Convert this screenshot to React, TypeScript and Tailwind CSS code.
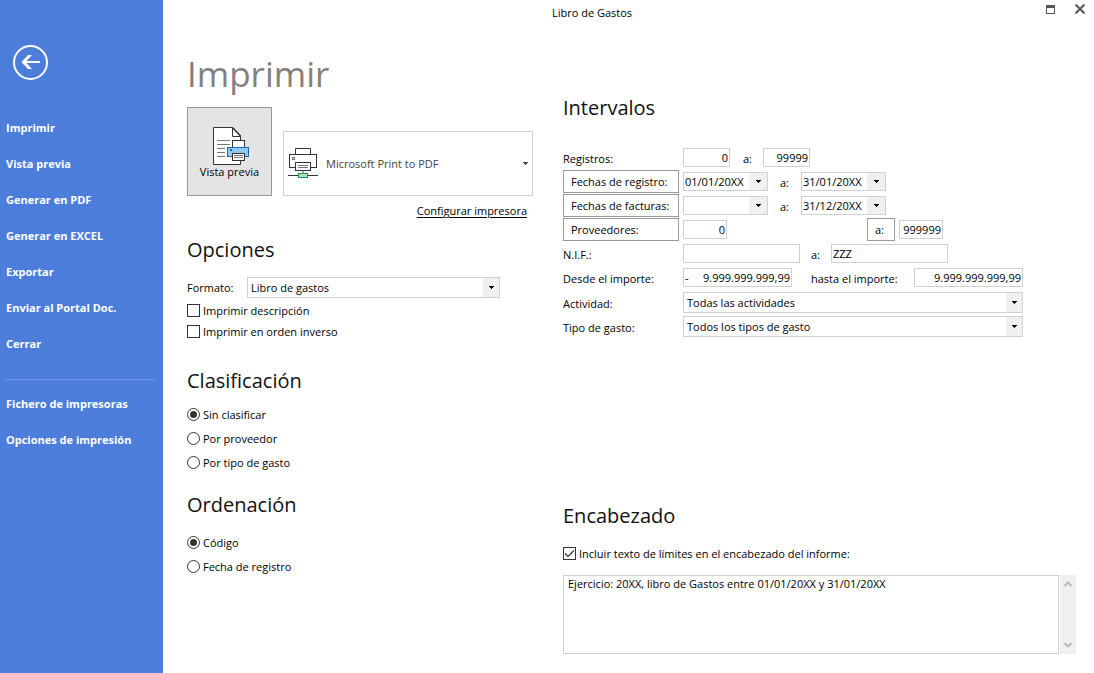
import React, { useState } from "react";

const MAIN_LINKS = [
  "Imprimir",
  "Vista previa",
  "Generar en PDF",
  "Generar en EXCEL",
  "Exportar",
  "Enviar al Portal Doc.",
  "Cerrar",
];
const EXTRA_LINKS = ["Fichero de impresoras", "Opciones de impresión"];

function Caret() {
  return (
    <svg width="5" height="3" viewBox="0 0 5 3" fill="currentColor" shapeRendering="crispEdges" aria-hidden="true">
      <path d="M0 0h5v1H4v1H3v1H2V2H1V1H0z" />
    </svg>
  );
}

function PreviewIcon() {
  return (
    <svg width="37" height="39" viewBox="0 0 37 39" fill="none" aria-hidden="true">
      <path d="M.5.5H19.5L27.5 9V37.5H.5z" fill="#fff" stroke="#333" />
      <path d="M19.5.5V9.5H27.5" stroke="#333" />
      <path d="M20 1l7.500 8" stroke="#333" strokeWidth="1.500" />
      <path d="M4 13.500h13M4 17.500h13M4 21.500h8M4 25.500h8M4 29.500h8" stroke="#777" />
      <rect x="19.500" y="13.500" width="12" height="8" fill="#fff" stroke="#333" />
      <rect x="14.500" y="20.500" width="21" height="9" fill="#90c8f2" stroke="#1a68b0" />
      <rect x="17" y="22" width="2" height="2" fill="#1a68b0" />
      <rect x="19.500" y="26.500" width="12" height="7" fill="#fff" stroke="#333" />
      <path d="M21 28.500h9M21 30.500h9" stroke="#777" />
    </svg>
  );
}

function PrinterIcon() {
  return (
    <svg width="30" height="31" viewBox="0 0 30 31" fill="none" aria-hidden="true">
      <path d="M7.500 6.500V.5H22.500V6.500" stroke="#333" />
      <rect x="1.500" y="6.500" width="27" height="13" fill="#fff" stroke="#333" />
      <rect x="4.500" y="9.500" width="2" height="2" stroke="#777" />
      <rect x="7.500" y="14.500" width="15" height="8" fill="#fff" stroke="#333" />
      <path d="M10 17.500h10M10 19.500h10" stroke="#777" />
      <path d="M15 23v2" stroke="#aaa" strokeWidth="2" />
      <path d="M0 27.500h30" stroke="#333" />
      <rect x="10.500" y="25.500" width="9" height="4" fill="#b5dfc0" stroke="#109a48" />
    </svg>
  );
}

function Heading({ children, className = "" }: { children: React.ReactNode; className?: string }) {
  return <h2 className={`text-[20px] leading-7 font-normal text-[#111] ${className}`}>{children}</h2>;
}

function CheckBox({ label, checked = false }: { label: string; checked?: boolean }) {
  const [on, setOn] = useState(checked);
  return (
    <label className="flex h-[21px] items-center gap-[3px]">
      <span className="relative size-[13px]">
        <input
          type="checkbox"
          checked={on}
          onChange={(e) => setOn(e.target.checked)}
          className="block size-[13px] appearance-none border border-[#333] bg-white"
        />
        {on && (
          <svg className="pointer-events-none absolute inset-0" width="13" height="13" viewBox="0 0 13 13" fill="none" aria-hidden="true">
            <path d="M2 6.500l3 3 6-6" stroke="#333" strokeWidth="1.200" />
          </svg>
        )}
      </span>
      {label}
    </label>
  );
}

function RadioList({ name, options, className = "" }: { name: string; options: string[]; className?: string }) {
  return (
    <div role="radiogroup" aria-label={name} className={className}>
      {options.map((option, i) => (
        <label key={option} className="flex h-6 items-center gap-[3px]">
          <input
            type="radio"
            name={name}
            defaultChecked={i === 0}
            className="grid size-[13px] appearance-none place-content-center rounded-full border border-[#333] bg-white before:size-[7px] before:rounded-full checked:before:bg-[#333]"
          />
          <span className="pt-0.5">{option}</span>
        </label>
      ))}
    </div>
  );
}

function DropDown({ id, value, className = "" }: { id: string; value: string; className?: string }) {
  return (
    <span className={`relative block ${className}`}>
      <select id={id} className="block h-[21px] w-full appearance-none border border-[#d0d0d0] bg-white pr-5 pl-[3px]">
        <option>{value}</option>
      </select>
      <span className="pointer-events-none absolute inset-y-px right-px flex w-4 items-center justify-center bg-[#f0f0f0]">
        <Caret />
      </span>
    </span>
  );
}

function Field({ label, value = "", className = "" }: { label: string; value?: string; className?: string }) {
  return (
    <input
      type="text"
      aria-label={label}
      defaultValue={value}
      className={`h-[19px] border border-[#d0d0d0] bg-white px-px ${className}`}
    />
  );
}

function DateField({ label, value = "" }: { label: string; value?: string }) {
  return (
    <span className="flex h-[19px] w-[85px] border border-[#d0d0d0] bg-white">
      <input type="text" aria-label={label} defaultValue={value} className="w-0 grow bg-transparent pl-px" />
      <button type="button" aria-label={`Elegir ${label}`} className="flex w-[18px] items-center justify-center bg-[#f0f0f0]">
        <Caret />
      </button>
    </span>
  );
}

function Row({ head, children }: { head: React.ReactNode; children: React.ReactNode }) {
  return (
    <div className="grid h-6 grid-cols-[116px_1fr] gap-x-1">
      <div className="flex h-[23px] items-center">{head}</div>
      <div className="flex h-[23px] items-center">{children}</div>
    </div>
  );
}

function RowText({ children, htmlFor }: { children: React.ReactNode; htmlFor?: string }) {
  return (
    <label htmlFor={htmlFor} className="pt-[3px]">
      {children}
    </label>
  );
}

function BoxButton({ children, className = "" }: { children: React.ReactNode; className?: string }) {
  return (
    <button type="button" className={`h-[23px] border border-[#999] bg-white text-left ${className}`}>
      {children}
    </button>
  );
}

function SideLink({ label }: { label: string }) {
  return (
    <li>
      <a href="#" className="flex h-9 items-center pl-1.5">
        {label}
      </a>
    </li>
  );
}

export default function App() {
  return (
    <div className="flex min-h-screen bg-white font-['Open_Sans','Noto_Sans',sans-serif] text-[11px] leading-4 text-black">
      <aside className="w-[163px] shrink-0 bg-[#4d7ddb] pt-[45px] font-bold text-white">
        <button type="button" aria-label="Volver" className="ml-[13px] block">
          <svg width="35" height="35" viewBox="0 0 35 35" fill="none" stroke="#fff" aria-hidden="true">
            <circle cx="17.500" cy="17.500" r="16.500" strokeWidth="2" />
            <path d="M10 17h17" strokeWidth="2" />
            <path d="M19 10h-4l-6.500 7 6.500 7h4l-6.500-7z" fill="#fff" stroke="none" />
          </svg>
        </button>
        <nav className="mt-[30px]">
          <ul>
            {MAIN_LINKS.map((label) => (
              <SideLink key={label} label={label} />
            ))}
          </ul>
          <hr className="mt-[17px] mr-2 mb-1.5 ml-[5px] border-[#7199e6]" />
          <ul>
            {EXTRA_LINKS.map((label) => (
              <SideLink key={label} label={label} />
            ))}
          </ul>
        </nav>
      </aside>

      <div className="flex min-w-0 grow flex-col">
        <header className="flex h-[26px]">
          <p className="grow pt-[5px] text-center">Libro de Gastos</p>
          <div className="flex gap-5 pt-1 pr-[9px] pl-6 text-[#555]">
            <button type="button" aria-label="Maximizar" className="size-[10px]">
              <svg width="10" height="10" viewBox="0 0 10 10" fill="currentColor" shapeRendering="crispEdges" aria-hidden="true">
                <path fillRule="evenodd" d="M1 1h9v9H1zM2 4v5h7V4z" />
              </svg>
            </button>
            <button type="button" aria-label="Cerrar ventana" className="size-[10px]">
              <svg width="10" height="10" viewBox="0 0 10 10" fill="none" stroke="currentColor" strokeWidth="2" aria-hidden="true">
                <path d="M.5.5l9 9M9.500.5l-9 9" />
              </svg>
            </button>
          </div>
        </header>

        <main className="flex gap-[30px] pr-[18px] pl-6">
          <section className="w-[346px] shrink-0 pt-6">
            <h1 className="h-[57px] text-[35px] leading-[48px] font-normal text-[#858080]">Imprimir</h1>
            <div className="flex items-end gap-[11px]">
              <button
                type="button"
                className="flex h-[89px] w-[85px] shrink-0 flex-col items-center border border-[#999] bg-[#e4e4e4] pt-[19px]"
              >
                <span className="pl-1">
                  <PreviewIcon />
                </span>
                <span className="-mt-0.5">Vista previa</span>
              </button>
              <div className="relative grow text-[#444]">
                <select
                  aria-label="Impresora"
                  className="block h-[65px] w-full appearance-none border border-[#d0d0d0] bg-white pr-5 pl-[42px]"
                >
                  <option>Microsoft Print to PDF</option>
                </select>
                <span className="pointer-events-none absolute inset-y-0 left-[5px] flex items-center">
                  <PrinterIcon />
                </span>
                <span className="pointer-events-none absolute inset-y-0 right-[5px] flex items-center">
                  <Caret />
                </span>
              </div>
            </div>
            <p className="mt-[7px] pr-1.5 text-right">
              <a href="#" className="underline underline-offset-2">
                Configurar impresora
              </a>
            </p>

            <Heading className="mt-[17px]">Opciones</Heading>
            <div className="mt-[13px] mb-0.5 flex items-center">
              <label htmlFor="formato" className="w-[60px]">
                Formato:
              </label>
              <DropDown id="formato" value="Libro de gastos" className="w-[253px]" />
            </div>
            <CheckBox label="Imprimir descripción" />
            <CheckBox label="Imprimir en orden inverso" />

            <Heading className="mt-[25px]">Clasificación</Heading>
            <RadioList name="clasificacion" className="mt-[7px]" options={["Sin clasificar", "Por proveedor", "Por tipo de gasto"]} />

            <Heading className="mt-[17px]">Ordenación</Heading>
            <RadioList name="ordenacion" className="mt-[11px]" options={["Código", "Fecha de registro"]} />
          </section>

          <section className="min-w-0 grow pt-[68px]">
            <Heading className="mb-6">Intervalos</Heading>
            <Row head={<RowText>Registros:</RowText>}>
              <Field label="Registro inicial" value="0" className="w-[47px] text-right" />
              <span className="w-[33px] pt-[3px] pl-[13px]">a:</span>
              <Field label="Registro final" value="99999" className="w-[47px] text-right" />
            </Row>
            <Row head={<BoxButton className="w-full pl-[7px]">Fechas de registro:</BoxButton>}>
              <DateField label="Fecha de registro inicial" value="01/01/20XX" />
              <span className="w-[33px] pt-[3px] pl-3">a:</span>
              <DateField label="Fecha de registro final" value="31/01/20XX" />
            </Row>
            <Row head={<BoxButton className="w-full pl-[7px]">Fechas de facturas:</BoxButton>}>
              <DateField label="Fecha de factura inicial" />
              <span className="w-[33px] pt-[3px] pl-3">a:</span>
              <DateField label="Fecha de factura final" value="31/12/20XX" />
            </Row>
            <Row head={<BoxButton className="w-full pl-[7px]">Proveedores:</BoxButton>}>
              <Field label="Proveedor inicial" value="0" className="w-11 text-right" />
              <BoxButton className="mr-1 ml-[140px] w-7 pl-[7px]">a:</BoxButton>
              <Field label="Proveedor final" value="999999" className="w-11 text-right" />
            </Row>
            <Row head={<RowText>N.I.F.:</RowText>}>
              <Field label="N.I.F. inicial" className="w-[117px]" />
              <span className="w-[31px] pt-[3px] pl-[11px]">a:</span>
              <Field label="N.I.F. final" value="ZZZ" className="w-[117px]" />
            </Row>
            <Row head={<RowText>Desde el importe:</RowText>}>
              <span className="flex h-[19px] w-[109px] items-center border border-[#d0d0d0] bg-white px-px">
                <span>-</span>
                <input type="text" aria-label="Importe inicial" defaultValue="9.999.999.999,99" className="w-0 grow text-right" />
              </span>
              <label htmlFor="importe-final" className="w-[122px] pt-[3px] pl-[19px]">
                hasta el importe:
              </label>
              <input
                id="importe-final"
                type="text"
                defaultValue="9.999.999.999,99"
                className="h-[19px] w-[109px] border border-[#d0d0d0] bg-white px-px text-right"
              />
            </Row>
            <div className="mt-px">
              <Row head={<RowText htmlFor="actividad">Actividad:</RowText>}>
                <DropDown id="actividad" value="Todas las actividades" className="w-[340px]" />
              </Row>
              <Row head={<RowText htmlFor="tipo">Tipo de gasto:</RowText>}>
                <DropDown id="tipo" value="Todos los tipos de gasto" className="w-[340px]" />
              </Row>
            </div>

            <Heading className="mt-[163px] mb-[13px]">Encabezado</Heading>
            <CheckBox label="Incluir texto de límites en el encabezado del informe:" checked />
            <div className="mt-[11px] flex h-[79px] gap-px">
              <textarea
                aria-label="Texto del encabezado"
                defaultValue="Ejercicio: 20XX, libro de Gastos entre 01/01/20XX y 31/01/20XX"
                className="grow resize-none border border-[#d0d0d0] bg-white px-1"
              />
              <div className="flex w-4 flex-col items-center justify-between bg-[#f0f0f0] py-1.5 text-[#bbb]" aria-hidden="true">
                <svg width="8" height="6" viewBox="0 0 8 6" fill="none" stroke="currentColor" strokeWidth="2">
                  <path d="M.5 5L4 1.500 7.500 5" />
                </svg>
                <svg width="8" height="6" viewBox="0 0 8 6" fill="none" stroke="currentColor" strokeWidth="2">
                  <path d="M.5 1L4 4.500 7.500 1" />
                </svg>
              </div>
            </div>
          </section>
        </main>
      </div>
    </div>
  );
}
